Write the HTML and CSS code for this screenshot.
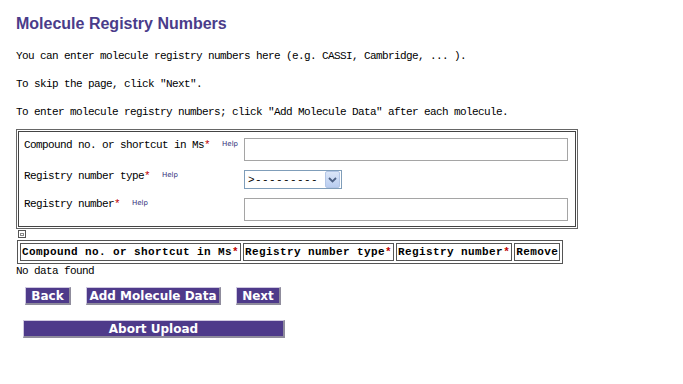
FILE: index.html
```html
<!DOCTYPE html>
<html lang="en">
<head>
    <meta charset="UTF-8">
    <title>Molecule Registry Numbers</title>
    <link rel="stylesheet" href="styles.css">
</head>
<body>
    <div class="page">
        <h1 class="title">Molecule Registry Numbers</h1>
        <div class="intro">
            <p class="note">You can enter molecule registry numbers here (e.g. CASSI, Cambridge, ... ).</p>
            <p class="note">To skip the page, click "Next".</p>
            <p class="note">To enter molecule registry numbers; click "Add Molecule Data" after each molecule.</p>
        </div>

        <div class="entry-box">
            <div class="entry-inner">
                <div class="entry-row">
                    <div class="entry-label">Compound no. or shortcut in Ms<span class="req">*</span><span class="help">Help</span></div>
                    <div class="entry-field"><input type="text" class="text-input"></div>
                </div>
                <div class="entry-row">
                    <div class="entry-label">Registry number type<span class="req">*</span><span class="help">Help</span></div>
                    <div class="entry-field">
                        <div class="select-box">
                            <span class="select-text">&gt;---------</span>
                            <span class="select-arrow">
                                <svg width="9" height="6" viewBox="0 0 9 6"><path d="M1 1 L4.5 4.5 L8 1" fill="none" stroke="#4d6185" stroke-width="1.8"/></svg>
                            </span>
                        </div>
                    </div>
                </div>
                <div class="entry-row">
                    <div class="entry-label">Registry number<span class="req">*</span><span class="help">Help</span></div>
                    <div class="entry-field"><input type="text" class="text-input"></div>
                </div>
            </div>
        </div>

        <span class="img-icon"><span></span></span>

        <table class="result-table">
            <tr>
                <th>Compound no. or shortcut in Ms<span class="req">*</span></th>
                <th>Registry number type<span class="req">*</span></th>
                <th>Registry number<span class="req">*</span></th>
                <th>Remove</th>
            </tr>
        </table>
        <p class="empty">No data found</p>

        <div class="actions">
            <button class="btn btn-back">Back</button>
            <button class="btn btn-add">Add Molecule Data</button>
            <button class="btn btn-next">Next</button>
        </div>
        <div class="abort-row">
            <button class="btn btn-abort">Abort Upload</button>
        </div>
    </div>
</body>
</html>
```
FILE: styles.css
```css
* {
    box-sizing: border-box;
}

body {
    margin: 0;
    background: #fff;
    color: #000;
    font-family: "Liberation Mono", "DejaVu Sans Mono", monospace;
    font-size: 11px;
    letter-spacing: -0.6px;
    line-height: 14px;
}

.page {
    padding: 14px 0 0 16px;
}

.title {
    margin: 0 0 15px;
    font-family: "Liberation Sans", Arial, sans-serif;
    font-size: 16px;
    line-height: 20px;
    letter-spacing: 0;
    font-weight: bold;
    color: #4a3c8a;
}

.intro {
    display: flex;
    flex-direction: column;
    gap: 14px;
    margin-bottom: 10px;
}

.note {
    margin: 0;
}

/* entry form */
.entry-box {
    width: 562px;
    border: 1px solid #666;
    padding: 1px;
}

.entry-inner {
    border: 1px solid #444;
    padding: 5px 0 5px 5px;
    display: flex;
    flex-direction: column;
    gap: 7px;
}

.entry-row {
    display: grid;
    grid-template-columns: 220px 324px;
    align-items: start;
}

.req {
    color: #c00000;
}

.help {
    margin-left: 12px;
    font-family: "DejaVu Sans", sans-serif;
    font-size: 7px;
    letter-spacing: 0;
    color: #2e2e78;
    vertical-align: 2px;
}

.entry-field {
    padding-top: 1px;
}

.entry-row:nth-child(n+2) .entry-field {
    padding-top: 2px;
}

.text-input {
    display: block;
    width: 324px;
    height: 23px;
    margin: 0;
    border: 1px solid #a5a5a5;
    background: #fff;
}

.select-box {
    display: flex;
    align-items: center;
    width: 98px;
    height: 19px;
    border: 1px solid #7f9db9;
    background: #fff;
}

.select-text {
    flex: 1;
    padding-left: 3px;
    letter-spacing: 0.4px;
}

.select-arrow {
    display: flex;
    align-items: center;
    justify-content: center;
    width: 15px;
    height: 17px;
    margin-right: 1px;
    border: 1px solid #b3c6e6;
    border-radius: 2px;
    background: linear-gradient(#dbe6f8, #b9cdf0);
}

/* broken image placeholder */
.img-icon {
    display: block;
    width: 8px;
    height: 8px;
    margin: 1px 0 0 2px;
    border: 1px solid #555;
    padding: 2px 1px 1px 1px;
}

.img-icon span {
    display: block;
    width: 4px;
    height: 3px;
    border: 1px solid #888;
}

/* results */
.result-table {
    margin: 2px 0 0 1px;
    border: 1px solid #555;
    border-spacing: 2px;
}

.result-table th {
    border: 1px solid #555;
    padding: 1px 1px;
    font-weight: bold;
    letter-spacing: 0.4px;
    text-align: left;
    white-space: nowrap;
}

.empty {
    margin: 0;
}

/* buttons */
.actions {
    display: flex;
    gap: 15px;
    margin: 9px 0 0 9px;
}

.abort-row {
    margin: 15px 0 0 7px;
}

.btn {
    display: block;
    height: 18px;
    padding: 0;
    margin: 0;
    border-style: solid;
    border-width: 1px 2px 2px 1px;
    border-color: #cfc8e0 #8f8c9c #8f8c9c #cfc8e0;
    background: #4e3a8a;
    color: #fff;
    font-family: "DejaVu Sans", Verdana, sans-serif;
    font-weight: bold;
    font-size: 12px;
    line-height: 14px;
    letter-spacing: 0;
    text-align: center;
}

.btn-back {
    width: 46px;
}

.btn-add {
    width: 135px;
}

.btn-next {
    width: 45px;
}

.btn-abort {
    width: 262px;
}
```
